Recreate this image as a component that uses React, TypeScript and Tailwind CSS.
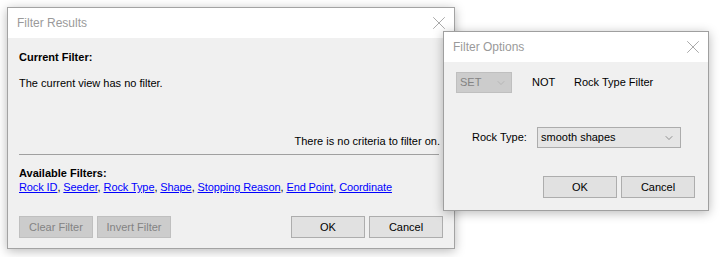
import { X, ChevronDown } from 'lucide-react'

const FONT = { fontFamily: '"Liberation Sans", Arial, sans-serif' }

const FILTERS = ['Rock ID', 'Seeder', 'Rock Type', 'Shape', 'Stopping Reason', 'End Point', 'Coordinate']

function WinButton({ label, disabled }: { label: string; disabled?: boolean }) {
  return (
    <button
      className={
        'h-[22px] w-[74px] border text-[11px] leading-none ' +
        (disabled ? 'border-[#bfbfbf] bg-[#cccccc] text-[#838383]' : 'border-[#adadad] bg-[#e1e1e1] text-black')
      }
    >
      {label}
    </button>
  )
}

function TitleBar({ title }: { title: string }) {
  return (
    <div className="flex h-[30px] items-center justify-between bg-white pl-[9px] pr-[4px]">
      <span className="text-[12px] text-[#9a9a9a]">{title}</span>
      <X className="h-[22px] w-[22px] text-[#8a8a8a]" strokeWidth={0.8} />
    </div>
  )
}

export default function App() {
  return (
    <div className="relative h-[257px] w-[720px] overflow-hidden bg-white text-black" style={FONT}>
      {/* Filter Results */}
      <div className="absolute left-[7px] top-[7px] flex h-[242px] w-[448px] flex-col border border-[#a3a3a3] bg-[#f0f0f0] shadow-[0_2px_10px_rgba(0,0,0,0.28)]">
        <TitleBar title="Filter Results" />
        <div className="flex flex-1 flex-col px-[11px] pt-[11px] text-[11px]">
          <p className="font-bold leading-[16px]">Current Filter:</p>
          <p className="mt-[10px] leading-[16px]">The current view has no filter.</p>
          <p className="mt-[42px] pr-[3px] text-right leading-[16px]">There is no criteria to filter on.</p>
          <div className="mt-[5px] mr-[4px] h-px bg-[#a0a0a0]" />
          <p className="mt-[11px] font-bold leading-[14px]">Available Filters:</p>
          <p className="leading-[14px] tracking-[-0.1px]">
            {FILTERS.map((f, i) => (
              <span key={f}>
                <a className="text-[#0000ff] underline">{f}</a>
                {i < FILTERS.length - 1 ? ', ' : ''}
              </span>
            ))}
          </p>
          <div className="mt-[22px] flex items-center">
            <div className="flex gap-[4px]">
              <WinButton label="Clear Filter" disabled />
              <WinButton label="Invert Filter" disabled />
            </div>
            <div className="ml-auto flex gap-[4px]">
              <WinButton label="OK" />
              <WinButton label="Cancel" />
            </div>
          </div>
        </div>
      </div>

      {/* Filter Options */}
      <div className="absolute left-[443px] top-[31px] flex h-[180px] w-[266px] flex-col border border-[#9f9f9f] bg-[#f0f0f0] shadow-[0_2px_10px_rgba(0,0,0,0.28)]">
        <TitleBar title="Filter Options" />
        <div className="flex flex-1 flex-col text-[11px]">
          <div className="mt-[10px] flex items-center">
            <div className="ml-[12px] flex h-[21px] w-[56px] items-center justify-between border border-[#bfbfbf] bg-[#cccccc] pl-[3px] pr-[4px] text-[#838383]">
              <span>SET</span>
              <ChevronDown className="h-[12px] w-[12px] text-[#a8a8a8]" strokeWidth={1.2} />
            </div>
            <span className="ml-[20px] w-[42px]">NOT</span>
            <span>Rock Type Filter</span>
          </div>
          <div className="mt-[34px] flex items-center">
            <span className="ml-[28px] w-[65px]">Rock Type:</span>
            <div className="flex h-[21px] w-[144px] items-center justify-between border border-[#acacac] bg-[#e5e5e5] pl-[3px] pr-[5px]">
              <span>smooth shapes</span>
              <ChevronDown className="h-[12px] w-[12px] text-[#555]" strokeWidth={1.2} />
            </div>
          </div>
          <div className="mt-[28px] flex justify-end gap-[4px] pr-[13px]">
            <WinButton label="OK" />
            <WinButton label="Cancel" />
          </div>
        </div>
      </div>
    </div>
  )
}
